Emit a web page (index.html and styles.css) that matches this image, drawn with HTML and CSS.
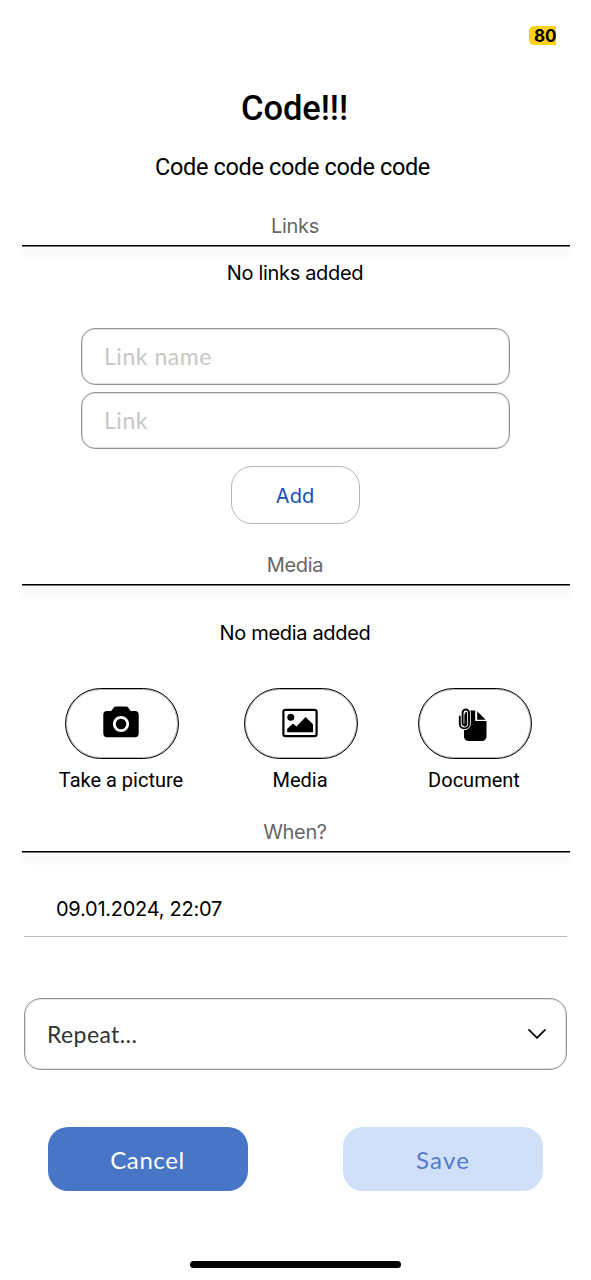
FILE: index.html
```html
<!DOCTYPE html>
<html lang="en">
<head>
<meta charset="utf-8">
<title>Code!!!</title>
<link rel="stylesheet" href="styles.css">
</head>
<body>
<div class="screen">
  <header class="status"><span class="battery">80</span></header>
  <h1 class="title">Code!!!</h1>
  <p class="subtitle">Code code code code code</p>

  <h2 class="section">Links</h2>
  <p class="empty empty-links">No links added</p>
  <div class="fields">
    <div class="field">Link name</div>
    <div class="field">Link</div>
  </div>
  <button class="add">Add</button>

  <h2 class="section section-media">Media</h2>
  <p class="empty empty-media">No media added</p>
  <div class="media">
    <div class="item">
      <button class="pill pill-camera">
        <svg width="36" height="32" viewBox="0 0 36 32"><path d="M4 5h3.500c2.500 0 2-4.500 5.500-4.500h10c3.500 0 3 4.500 5.500 4.500H32a3.700 3.700 0 0 1 3.700 3.700V27.500A3.700 3.700 0 0 1 32 31.200H4A3.700 3.700 0 0 1 .3 27.500V8.700A3.700 3.700 0 0 1 4 5z"/><circle cx="18" cy="18" r="6.700" fill="none" stroke="#fff" stroke-width="2.800"/></svg>
      </button>
      <span class="label">Take a picture</span>
    </div>
    <div class="item">
      <button class="pill pill-image">
        <svg width="36" height="30" viewBox="0 0 36 30"><rect x="1.400" y="1.900" width="33.200" height="26.200" rx="2.200" fill="none" stroke="#000" stroke-width="2.200"/><circle cx="8.800" cy="9.200" r="3.500"/><path d="M5.200 24.200v-3.400l5.900-5.400 3.300 3 9.200-9.300 7.400 7.200v7.900z"/></svg>
      </button>
      <span class="label">Media</span>
    </div>
    <div class="item">
      <button class="pill pill-document">
        <svg width="30" height="36" viewBox="0 0 30 36"><path d="M10 3.500h7.200V14H28.500v15.500a4.500 4.500 0 0 1-4.500 4.500H10.500A4.500 4.500 0 0 1 6 29.500V8z"/><path d="M19.200 4.200l8.500 8.500h-8.500z"/><path class="clip-gap" d="M1.800 9.500v7.300a4.600 4.600 0 0 0 9.200 0V5.700a3.200 3.200 0 0 0-6.400 0v10.600"/><path class="clip" d="M1.800 9.500v7.300a4.600 4.600 0 0 0 9.200 0V5.700a3.200 3.200 0 0 0-6.400 0v10.600a1.600 1.600 0 0 0 3.200 0V6.200"/></svg>
      </button>
      <span class="label">Document</span>
    </div>
  </div>

  <h2 class="section section-when">When?</h2>
  <div class="date">09.01.2024, 22:07</div>
  <div class="select">
    <span>Repeat...</span>
    <svg width="20" height="12" viewBox="0 0 20 12"><path d="M2 1.800l8 8 8-8" fill="none" stroke="#000" stroke-width="1.700" stroke-linecap="round" stroke-linejoin="round"/></svg>
  </div>
  <div class="actions">
    <button class="btn cancel">Cancel</button>
    <button class="btn save">Save</button>
  </div>
  <div class="home"></div>
</div>
</body>
</html>
```
FILE: styles.css
```css
* { box-sizing: border-box; margin: 0; padding: 0; }
body { background: #fff; color: #000; font-family: Roboto, sans-serif; }
button { font: inherit; background: #fff; border: 0; display: flex; align-items: center; justify-content: center; }
svg { display: block; }

.screen { width: 591px; height: 1280px; display: flex; flex-direction: column; align-items: center; overflow: hidden; white-space: nowrap; }
.status { width: 100%; height: 87px; padding: 26px 35px 0 0; display: flex; justify-content: flex-end; align-items: flex-start; }
.battery { width: 27px; height: 19px; padding-left: 5px; border-radius: 5px 0 0 5px; background: #fbd21b; font: 700 17px/20px Inter, sans-serif; }
.title { font-size: 34.500px; font-weight: 500; line-height: 42px; letter-spacing: -.05px; padding-right: 2px; }
.subtitle { font-size: 23.500px; line-height: 30px; margin-top: 23px; letter-spacing: -.35px; padding-right: 6px; }

.section { width: 548px; height: 35px; margin-top: 30px; color: #666; text-align: center; font: 400 20px/28px Inter, sans-serif; letter-spacing: -.35px; text-indent: -1px; }
.section::after { content: ""; display: block; height: 2px; margin-top: 5px; background: linear-gradient(#000 50%, #777 50%); box-shadow: 0 6px 9px rgba(0,0,0,.14); }
.empty { font: 400 20px/28px Inter, sans-serif; letter-spacing: -.33px; padding-right: 1px; }
.empty-links { margin-top: 12px; }
.fields { width: 429px; margin-top: 41px; display: flex; flex-direction: column; gap: 7px; }
.field { height: 57px; padding: 0 0 2px 22px; border: 1px solid #929292; box-shadow: inset 0 0 0 1px #e2e2e2; border-radius: 14px; display: flex; align-items: center; color: #c7c7c7; font-family: Lato, sans-serif; font-size: 23px; letter-spacing: .55px; }
.add { width: 129px; height: 58px; margin-top: 17px; padding: 1px 1px 0 0; border: 1px solid #b5b5b5; border-radius: 21px; color: #164fb0; font: 400 20px/28px Inter, sans-serif; }
.section-media { margin-top: 27px; }
.empty-media { margin-top: 33px; }

.media { width: 467px; height: 106px; margin: 41px 0 0 6px; display: flex; justify-content: space-between; }
.item { width: 114px; display: flex; flex-direction: column; align-items: center; }
.item:nth-child(2) { margin: 0 -6px 0 -1px; }
.pill { width: 114px; height: 71px; flex: none; border: 1px solid #000; box-shadow: inset 0 0 0 1px rgba(0,0,0,.3); border-radius: 36px; }
.pill-camera { padding: 0 3px 3px 0; }
.pill-image { padding: 0 2px 1px 0; }
.pill-document { padding: 3px 5px 0 0; }
.label { font-size: 20px; line-height: 26px; margin-top: 8px; padding-right: 2px; }
.clip-gap, .clip { fill: none; stroke-linecap: round; }
.clip-gap { stroke: #fff; stroke-width: 3.600px; }
.clip { stroke: #000; stroke-width: 1.900px; }

.section-when { margin-top: 24px; }
.date { width: 543px; height: 84px; padding: 42px 0 0 32px; border-bottom: 1px solid #bbb; font: 400 20px/28px Inter, sans-serif; letter-spacing: -.25px; }
.select { width: 543px; height: 72px; margin-top: 61px; padding: 0 19px 0 22px; border: 1px solid #929292; box-shadow: inset 0 0 0 1px #e2e2e2; border-radius: 17px; display: flex; align-items: center; justify-content: space-between; color: #333; font-family: Lato, sans-serif; font-size: 23px; letter-spacing: .4px; }
.select span { padding-bottom: 1px; }
.actions { width: 495px; margin-top: 57px; display: flex; justify-content: space-between; }
.btn { width: 200px; height: 64px; border-radius: 20px; font-family: Lato, sans-serif; font-size: 24px; letter-spacing: .6px; }
.cancel { background: #4776c6; color: #fff; padding-right: 1px; }
.save { background: #d1e0f9; color: #5379cb; letter-spacing: 1.200px; }
.home { width: 211px; height: 7px; margin-top: 70px; border-radius: 4px; background: #000; }
```
